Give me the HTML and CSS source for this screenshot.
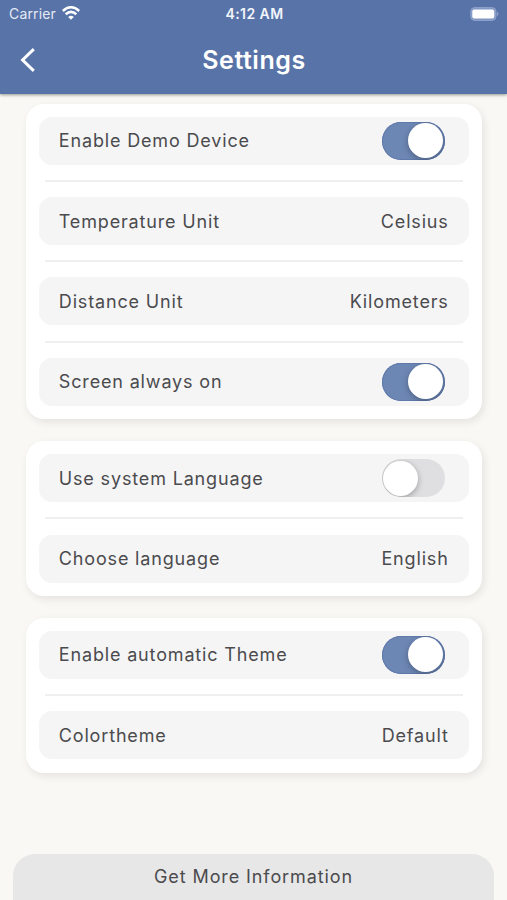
FILE: index.html
```html
<!DOCTYPE html>
<html lang="en">
<head>
<meta charset="utf-8">
<title>Settings</title>
<link rel="stylesheet" href="styles.css">
</head>
<body>
<div class="screen">
  <header class="header">
    <div class="status">
      <div class="carrier"><span>Carrier</span>
        <svg class="wifi" viewBox="0 0 18 14" width="18" height="14"><g fill="none" stroke="#fff" stroke-width="2.5"><path d="M.8 5Q9-2.400 17.200 5"/><path d="M3.700 8.300Q9 3.500 14.300 8.300"/></g><path d="M6.200 10.900Q9 8.500 11.800 10.900L9 13.700z" fill="#fff"/></svg>
      </div>
      <time class="clock">4:12 AM</time>
      <div class="power">
        <svg viewBox="0 0 30 14" width="30" height="14"><rect x=".8" y=".6" width="25.200" height="12.800" rx="3.800" fill="#8298c5" stroke="#8fa3cb"/><rect x="2.300" y="2.400" width="22" height="9.200" rx="2" fill="#fff"/><path d="M27.300 4.800Q29.500 7 27.300 9.200z" fill="#a3b4d6"/></svg>
      </div>
    </div>
    <div class="nav">
      <svg class="back" viewBox="0 0 16 26" width="16" height="26"><path d="M13.800 2.200L2.600 13L13.800 23.800" fill="none" stroke="#fff" stroke-width="3"/></svg>
      <h1 class="title">Settings</h1>
    </div>
  </header>
  <main class="content">
    <section class="card">
      <div class="row"><span>Enable Demo Device</span><i class="switch on"></i></div>
      <hr class="divider">
      <div class="row"><span>Temperature Unit</span><span>Celsius</span></div>
      <hr class="divider">
      <div class="row"><span>Distance Unit</span><span>Kilometers</span></div>
      <hr class="divider">
      <div class="row"><span>Screen always on</span><i class="switch on"></i></div>
    </section>
    <section class="card">
      <div class="row"><span>Use system Language</span><i class="switch"></i></div>
      <hr class="divider">
      <div class="row"><span>Choose language</span><span>English</span></div>
    </section>
    <section class="card">
      <div class="row"><span>Enable automatic Theme</span><i class="switch on"></i></div>
      <hr class="divider">
      <div class="row"><span>Colortheme</span><span>Default</span></div>
    </section>
  </main>
  <footer class="more">Get More Information</footer>
</div>
</body>
</html>
```
FILE: styles.css
```css
* { box-sizing: border-box; }
body { margin: 0; font-family: Inter, "Liberation Sans", sans-serif; }
.screen { height: 900px; display: flex; flex-direction: column; overflow: hidden; background: #f9f8f4; color: #4b4b4e; }
.header { height: 94px; flex: none; background: #5873a8; color: #fff; box-shadow: 0 1px 3px rgba(0,0,0,.4); z-index: 1; }
.status { height: 28px; display: grid; grid-template-columns: 1fr auto 1fr; align-items: center; padding: 0 7px 0 9px; font-size: 14px; line-height: 28px; }
.carrier { display: flex; align-items: center; gap: 6px; color: #e5eaf4; letter-spacing: .15px; }
.wifi { margin-top: -2px; }
.clock { font-weight: 600; font-size: 14px; letter-spacing: .45px; color: #f2f5fb; }
.power { display: flex; justify-content: flex-end; margin-top: -1px; }
.nav { height: 64px; display: grid; grid-template-columns: 1fr auto 1fr; align-items: center; padding: 0 19px 0 20px; }
.title { margin: 0; font-size: 25px; line-height: 30px; font-weight: 600; letter-spacing: .55px; }
.content { flex: 1; padding: 9.6px 25px 0 25.5px; display: flex; flex-direction: column; gap: 21.9px; }
.card { padding: 13.3px; border-radius: 18px; background: #fff; box-shadow: 2px 3px 8px rgba(0,0,0,.09); }
.row { height: 48px; padding: 0 20px; display: flex; align-items: center; justify-content: space-between; border-radius: 13px; background: #f5f5f5; font-size: 18px; letter-spacing: .84px; white-space: nowrap; }
.divider { height: 2px; margin: 15.1px 6px 15.2px; border: 0; background: #efefef; }
.switch { display: flex; width: 63px; height: 38px; margin-right: 4px; padding: 1.5px; border-radius: 19px; background: #dfdfe2; overflow: hidden; }
.switch::before { content: ""; width: 35px; height: 35px; border-radius: 50%; background: #fff; box-shadow: 0 2px 6px rgba(0,0,0,.3); }
.switch.on { justify-content: flex-end; background: #6d87b5; box-shadow: inset 0 0 0 1px #6079ab; }
.more { height: 46px; flex: none; margin: 0 13px; border-radius: 22px 22px 0 0; background: #e7e7e7; font-size: 18px; line-height: 45px; letter-spacing: .9px; text-align: center; }
```
